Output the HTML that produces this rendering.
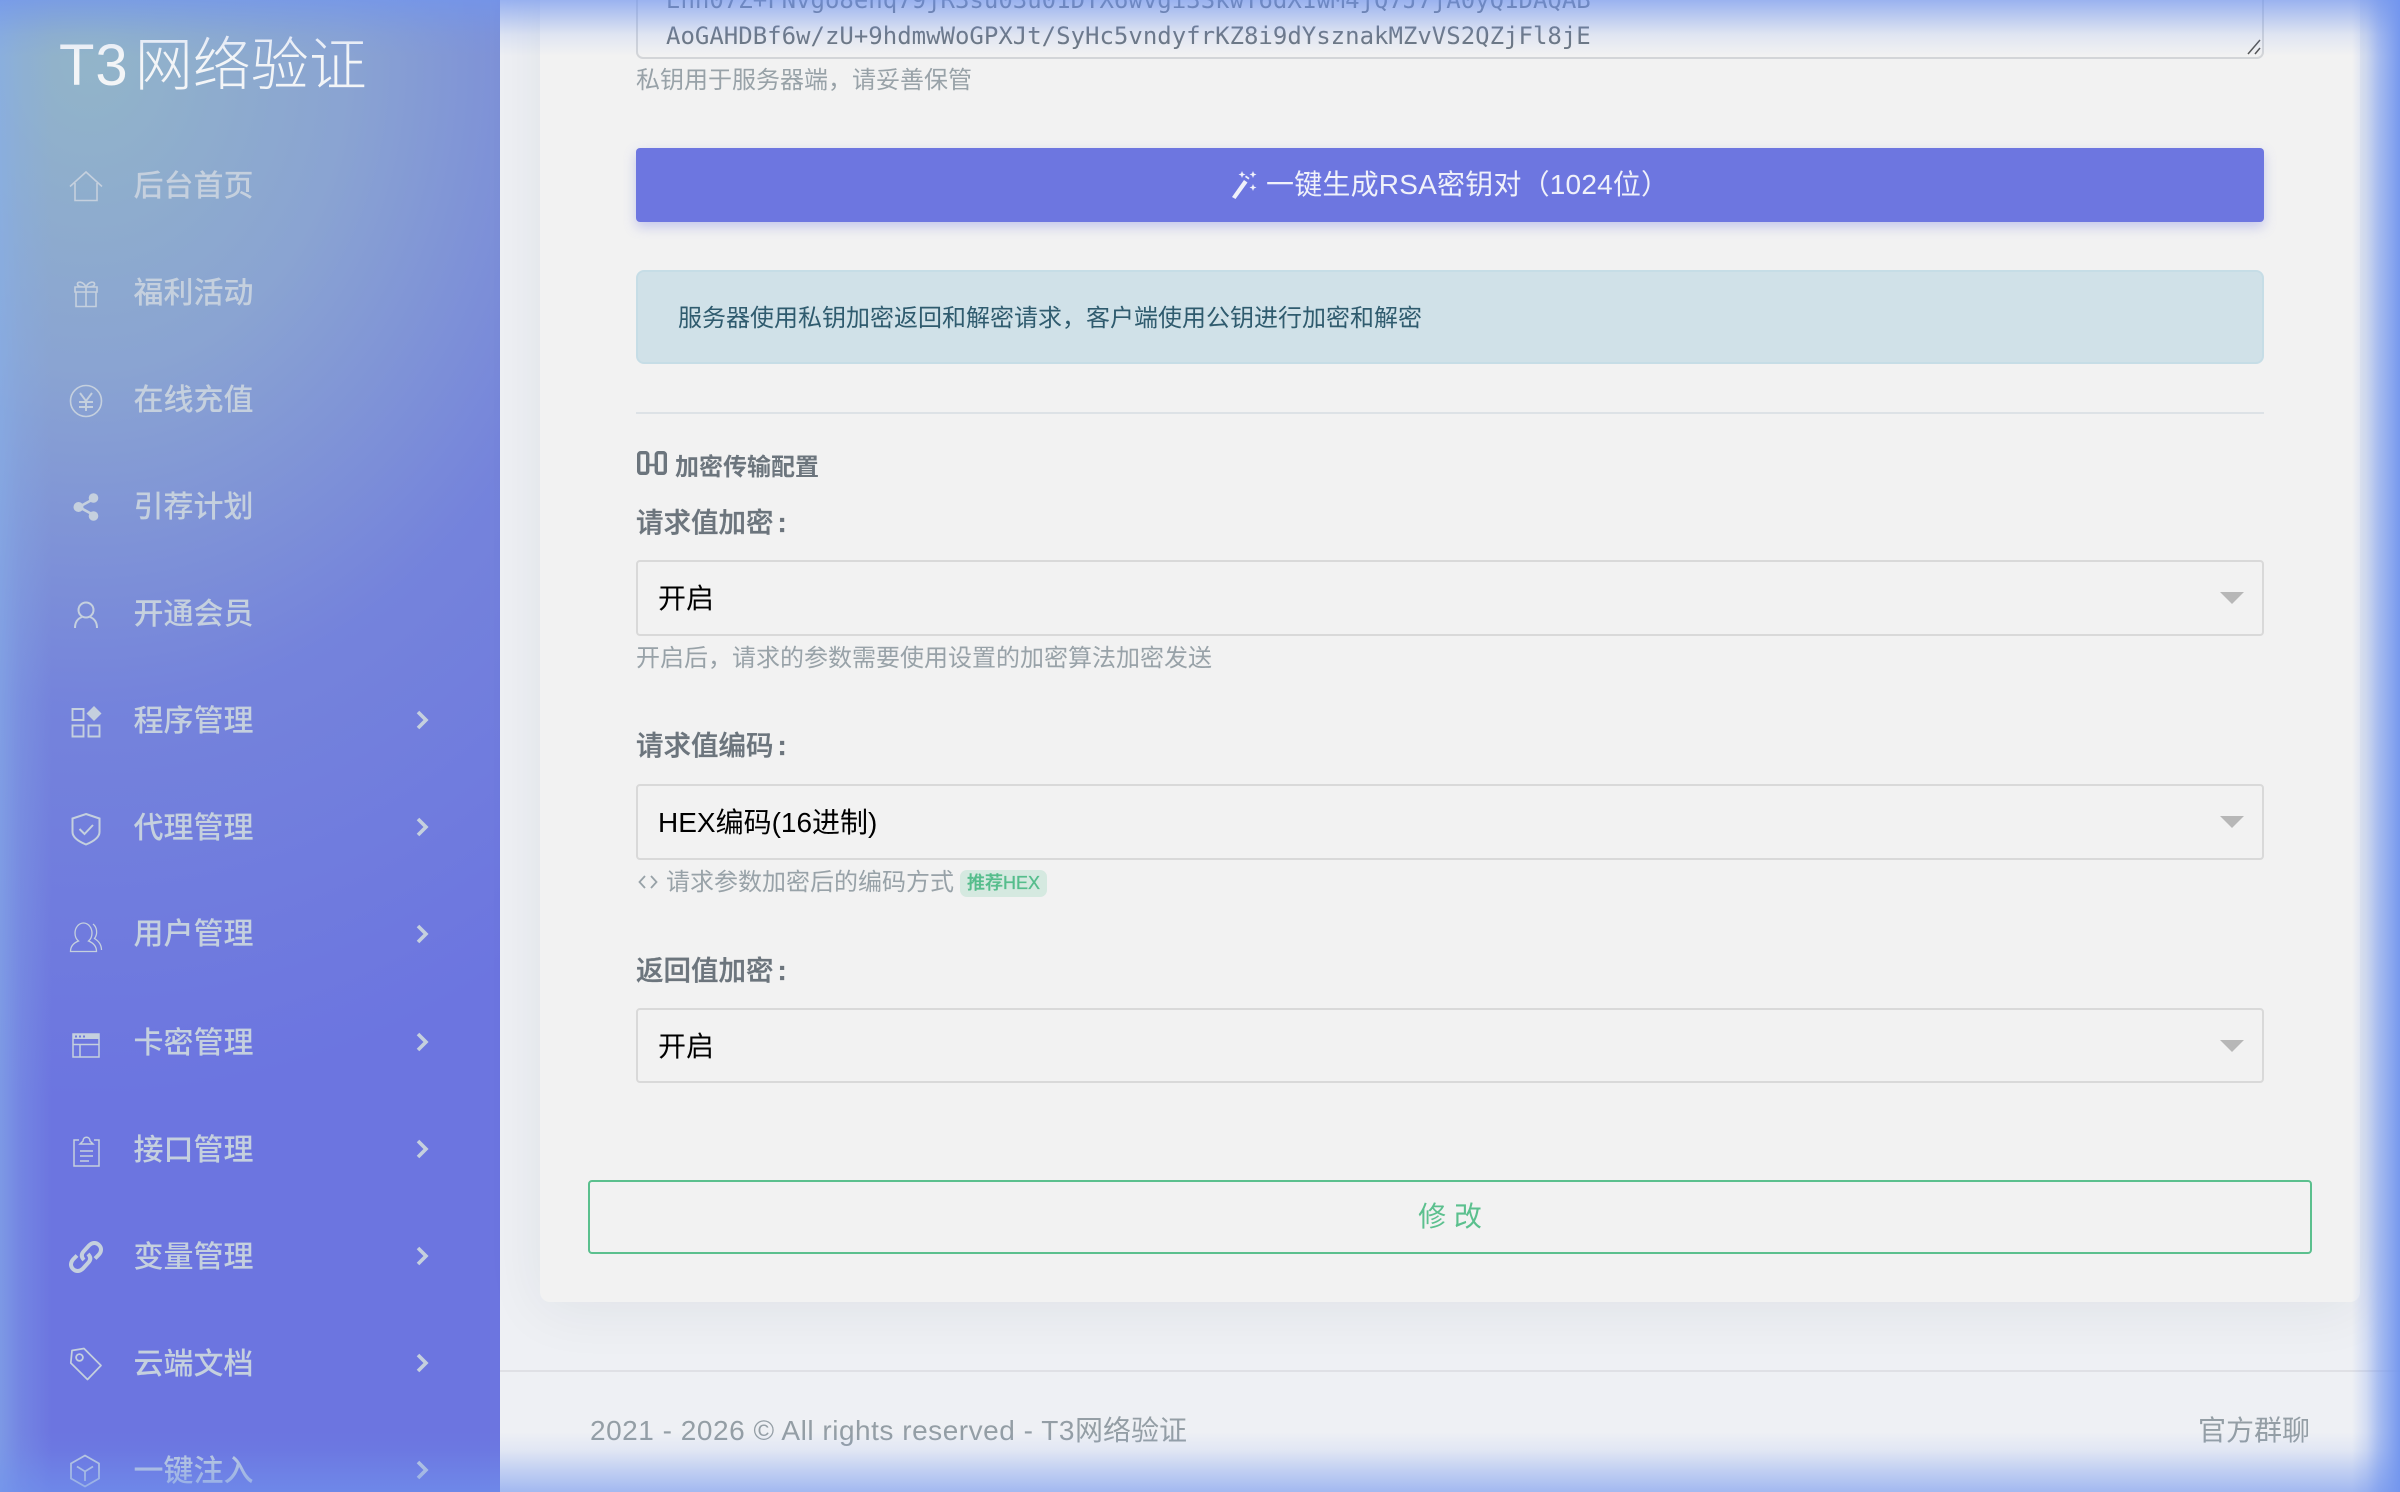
<!DOCTYPE html>
<html lang="zh">
<head>
<meta charset="utf-8">
<title>T3网络验证</title>
<style>
html,body{margin:0;padding:0;width:2400px;height:1492px;overflow:hidden;background:#eef0f4}
body{position:relative;font-family:"Liberation Sans","Noto Sans CJK SC",sans-serif}
.a{position:absolute;white-space:nowrap}
#side{position:absolute;left:0;top:0;width:500px;height:1492px;overflow:hidden;
background:
radial-gradient(ellipse 860px 1040px at 90px 60px,rgba(148,184,200,.95) 0,rgba(142,170,208,.88) 30%,rgba(125,145,215,.5) 62%,rgba(108,117,224,0) 100%),
#6c75e0}
.nav{position:absolute;left:133.500px;font-size:30px;line-height:40px;height:40px;color:#c5d0de;white-space:nowrap;font-weight:500}
.ic{position:absolute;left:70px;width:32px;height:32px;fill:none;stroke:#c5d0de;stroke-width:1.600;overflow:visible}
.ch{position:absolute;left:415px;width:14px;height:20px;fill:none;stroke:#c5d0de;stroke-width:3.600}
#card{position:absolute;left:540px;top:-40px;width:1820px;height:1342px;background:#f2f2f2;border-radius:10px;box-shadow:0 6px 60px rgba(30,40,60,.07)}
.lab{font-size:27.500px;line-height:36px;font-weight:500;color:#6c757d;left:636px;-webkit-text-stroke:.35px #6c757d}
.lab i{font-style:normal;margin-left:4px;font-weight:700}
.help{font-size:24px;line-height:32px;color:#98a2a8;left:636px}
.sel{position:absolute;left:636px;width:1624px;height:72px;border:2px solid #d9d9d9;border-radius:4px;color:#000;font-size:28px;line-height:74px;text-indent:20px;white-space:nowrap}
.sel:after{content:"";position:absolute;right:18px;top:30px;border-left:12px solid transparent;border-right:12px solid transparent;border-top:12px solid #b7b7b7}
#glow{position:absolute;left:0;top:0;width:2400px;height:1492px;pointer-events:none;z-index:9;
background:
linear-gradient(to left,rgba(112,148,238,.95) 0,rgba(112,148,238,.55) 45%,rgba(112,148,238,.22) 70%,rgba(112,148,238,0) 100%) right top/48px 100% no-repeat,
linear-gradient(to bottom,rgba(112,148,238,.68) 0,rgba(112,148,238,.42) 30%,rgba(112,148,238,.14) 62%,rgba(112,148,238,0) 100%) left top/100% 56px no-repeat,
linear-gradient(to top,rgba(112,148,238,.6) 0,rgba(112,148,238,.36) 35%,rgba(112,148,238,.1) 70%,rgba(112,148,238,0) 100%) left bottom/100% 60px no-repeat,
linear-gradient(to right,rgba(135,175,232,.62) 0,rgba(135,175,232,.28) 40%,rgba(135,175,232,0) 100%) left top/52px 100% no-repeat}
</style>
</head>
<body>
<div id="side">
<div class="a" style="left:59px;top:25px;font-size:58px;line-height:82px;font-weight:300;color:#f3f5f7"><span style="letter-spacing:1px;margin-right:6px;font-weight:400">T3</span>网络验证</div>

<div class="nav" style="top:167px">后台首页</div>
<svg class="ic" style="top:170px" viewBox="0 0 32 32"><path d="M0 16.500 16 2l16 14.500M5 13v17.500h22V13"/></svg>

<div class="nav" style="top:274px">福利活动</div>
<svg class="ic" style="top:277px" viewBox="0 0 32 32"><path d="M6 15h20v14.500H6zM5 10h22v5H5zM16 10v19.500M16 10c-3-6-9-6-8.500-2.500.3 2 3 2.500 8.500 2.500zM16 10c3-6 9-6 8.500-2.500-.3 2-3 2.500-8.500 2.500z"/></svg>

<div class="nav" style="top:381px">在线充值</div>
<svg class="ic" style="top:385px" viewBox="0 0 32 32"><circle cx="16" cy="16" r="15.500"/><path d="M10 8l6 8 6-8M9 17h14M9 22h14M16 16v10" stroke-width="1.900"/></svg>

<div class="nav" style="top:488px">引荐计划</div>
<svg class="ic" style="top:491px" viewBox="0 0 32 32"><path d="M23.500 8 9 16l14.500 8" stroke-width="2.600"/><circle cx="23.500" cy="7" r="4.800" fill="#c5d0de" stroke="none"/><circle cx="8.500" cy="16" r="5" fill="#c5d0de" stroke="none"/><circle cx="23.500" cy="25" r="4.800" fill="#c5d0de" stroke="none"/></svg>

<div class="nav" style="top:595px">开通会员</div>
<svg class="ic" style="top:599px" viewBox="0 0 32 32"><circle cx="16" cy="11" r="7.500" stroke-width="2"/><path d="M5 29c0-6 3-9.500 7-11M27 29c0-6-3-9.500-7-11" stroke-width="2"/></svg>

<div class="nav" style="top:702px">程序管理</div>
<svg class="ic" style="top:706px" viewBox="0 0 32 32"><path d="M2.500 3h11v11h-11zM2.500 19.500h11v11h-11zM18.500 19.500h11v11h-11z" stroke-width="1.900"/><path d="M24 0l7.500 7.500L24 15l-7.500-7.500z" fill="#c5d0de" stroke="none"/></svg>

<div class="nav" style="top:809px">代理管理</div>
<svg class="ic" style="top:813px" viewBox="0 0 32 32"><path d="M16 1 29.500 5.500V19c0 5-5 9-13.500 12.500C7.500 28 2.500 24 2.500 19V5.500z" stroke-width="2"/><path d="M9.500 16l5 5 8.500-9" stroke-width="2"/></svg>

<div class="nav" style="top:915px">用户管理</div>
<svg class="ic" style="top:921px" viewBox="0 0 32 32"><path d="M.5 30.500c0-5 3-8.500 8-10.500-2.500-2-3.500-5-3.500-8 0-5 3.500-10 8.500-10s8.500 5 8.500 10c0 3-1 6-3.500 8 5 2 8 5.500 8 10.500zM23 3c4 3 5 10 1.500 14.500 4 2.500 7 6 7 11.500" stroke-width="1.300"/></svg>

<div class="nav" style="top:1024px">卡密管理</div>
<svg class="ic" style="top:1029px" viewBox="0 0 32 32"><path d="M3 5h26v23H3zM3 15.500h26M10 15.500V28" stroke-width="1.500"/><path d="M3 5h26v5H3z" fill="#c5d0de" stroke="none"/><path d="M5 6.500h2v2H5zM9 6.500h2v2H9zM13 6.500h2v2h-2z" fill="#6f7ad9" stroke="none"/></svg>

<div class="nav" style="top:1131px">接口管理</div>
<svg class="ic" style="top:1135px" viewBox="0 0 32 32"><path d="M9 5H4v26h25V5h-5M10 9h13l-2-2-1-1c0-5-7-5-7 0l-1 1zM10 16h13M10 21h13M10 26h9" stroke-width="1.500"/></svg>

<div class="nav" style="top:1238px">变量管理</div>
<svg class="ic" style="top:1241px" viewBox="0 0 32 32"><path d="M14 19c-3-3-3-6 0-9l5-5.500c3-3 7-3.500 10-.5s2.500 7-.5 10l-3.500 3.500M18 13c3 3 3 6 0 9l-5 5.500c-3 3-7 3.500-10 .5s-2.500-7 .5-10L7 14.500" stroke-width="4"/></svg>

<div class="nav" style="top:1345px">云端文档</div>
<svg class="ic" style="top:1348px" viewBox="0 0 32 32"><path d="M2 2.500 14 .5 31 17.500 17.500 31.500.8 15z" stroke-width="1.700" stroke-linejoin="round"/><circle cx="9.500" cy="9.500" r="3.400" stroke-width="1.800"/></svg>

<div class="nav" style="top:1452px">一键注入</div>
<svg class="ic" style="top:1455px" viewBox="0 0 32 32"><path d="M15 .5 29 8.500v15l-14 8-14-8v-15zM7 11.500l8 5 8-5M15 16.500V26" stroke-width="1.800"/></svg>

<svg class="ch" style="top:710px" viewBox="0 0 14 20"><path d="M3 2l8 8-8 8"/></svg>
<svg class="ch" style="top:817px" viewBox="0 0 14 20"><path d="M3 2l8 8-8 8"/></svg>
<svg class="ch" style="top:924px" viewBox="0 0 14 20"><path d="M3 2l8 8-8 8"/></svg>
<svg class="ch" style="top:1032px" viewBox="0 0 14 20"><path d="M3 2l8 8-8 8"/></svg>
<svg class="ch" style="top:1139px" viewBox="0 0 14 20"><path d="M3 2l8 8-8 8"/></svg>
<svg class="ch" style="top:1246px" viewBox="0 0 14 20"><path d="M3 2l8 8-8 8"/></svg>
<svg class="ch" style="top:1353px" viewBox="0 0 14 20"><path d="M3 2l8 8-8 8"/></svg>
<svg class="ch" style="top:1460px" viewBox="0 0 14 20"><path d="M3 2l8 8-8 8"/></svg>
</div>

<div id="card"></div>

<!-- textarea -->
<div style="position:absolute;left:636px;top:-40px;width:1624px;height:94.500px;border:2px solid #d3d5d8;border-radius:7px;overflow:hidden"></div>
<div class="a" style="left:666px;top:-18px;font:24px/36px 'DejaVu Sans Mono',monospace;color:#6c757d">Enn07Z+FNvgo8enq79jR3su03u01DYX6wvgi3SkwT6dX1wM4jQ7J7jA0yQ1DAQAB</div>
<div class="a" style="left:666px;top:18px;font:24px/36px 'DejaVu Sans Mono',monospace;color:#6c757d">AoGAHDBf6w/zU+9hdmwWoGPXJt/SyHc5vndyfrKZ8i9dYsznakMZvVS2QZjFl8jE</div>
<svg class="a" style="left:2246px;top:38px" width="16" height="18" viewBox="0 0 16 18" fill="none" stroke="#555" stroke-width="1.500"><path d="M2 16 14 2M9 16l5-6"/></svg>
<div class="a help" style="top:65px">私钥用于服务器端，请妥善保管</div>

<!-- purple button -->
<div style="position:absolute;left:636px;top:148px;width:1628px;height:74px;background:#6d76e0;border-radius:4px;box-shadow:0 5px 12px rgba(109,118,224,.35)"></div>
<svg class="a" style="left:1230px;top:169px" width="28" height="30" viewBox="0 0 28 30"><path d="M2 28 14 11l3.500 2.500L5.500 30z" fill="#f0f1fa"/><path d="M15 8l3.500 2.500 1-1.500L16 6.500z" fill="#f0f1fa"/><path d="M12 2l1 2.500 2.500 1-2.500 1-1 2.500-1-2.500-2.500-1 2.500-1zM23 2l1 2.500 2.500 1-2.500 1-1 2.500-1-2.500-2.500-1 2.500-1zM23 15l1 2.500 2.500 1-2.500 1-1 2.500-1-2.500-2.500-1 2.500-1z" fill="#f0f1fa"/></svg>
<div class="a" style="left:1266px;top:165px;font-size:28px;line-height:40px;color:#f0f1fa;letter-spacing:.2px">一键生成RSA密钥对（1024位）</div>

<!-- alert -->
<div style="position:absolute;left:636px;top:270px;width:1624px;height:90px;background:#d0e1e8;border:2px solid #c6dde6;border-radius:8px"></div>
<div class="a" style="left:678px;top:303px;font-size:24px;line-height:32px;color:#2f5b6e">服务器使用私钥加密返回和解密请求，客户端使用公钥进行加密和解密</div>

<div style="position:absolute;left:636px;top:412px;width:1628px;height:2px;background:#dde2e6"></div>

<svg class="a" style="left:637px;top:451px" width="30" height="24" viewBox="0 0 30 24" fill="none" stroke="#6c757d" stroke-width="3.400"><rect x="1.700" y="1.700" width="9" height="20.600" rx="2"/><rect x="19.300" y="1.700" width="9" height="20.600" rx="2"/><path d="M11 14h8" stroke-width="2.500"/></svg>
<div class="a" style="left:675px;top:452px;font-size:24px;line-height:32px;font-weight:700;color:#6c757d">加密传输配置</div>

<div class="a lab" style="top:505px">请求值加密<i>:</i></div>
<div class="sel" style="top:560px">开启</div>
<div class="a help" style="top:643px">开启后，请求的参数需要使用设置的加密算法加密发送</div>

<div class="a lab" style="top:728px">请求值编码<i>:</i></div>
<div class="sel" style="top:784px">HEX编码(16进制)</div>
<svg class="a" style="left:638px;top:872px" width="20" height="20" viewBox="0 0 20 20" fill="none" stroke="#98a2a8" stroke-width="1.800"><path d="M7 4 1.500 10 7 16M13 4l5.500 6L13 16"/></svg>
<div class="a help" style="left:666px;top:867px">请求参数加密后的编码方式</div>
<div class="a" style="left:960px;top:870px;width:87px;height:27px;background:#d5e9e0;border-radius:7px;color:#55bd8c;font-size:18px;line-height:27px;font-weight:500;-webkit-text-stroke:.3px #55bd8c;text-align:center">推荐HEX</div>

<div class="a lab" style="top:953px">返回值加密<i>:</i></div>
<div class="sel" style="top:1008px;height:71px">开启</div>

<div style="position:absolute;left:588px;top:1180px;width:1720px;height:70px;border:2px solid #5bc08e;border-radius:4px"></div>
<div class="a" style="left:588px;top:1197px;width:1724px;text-align:center;font-size:28px;line-height:40px;color:#5bc08e">修 改</div>

<!-- footer -->
<div style="position:absolute;left:500px;top:1370px;width:1900px;height:2px;background:#dfe0e5"></div>
<div class="a" style="left:590px;top:1411px;font-size:28px;line-height:40px;color:#949ea5"><span style="letter-spacing:.52px">2021 - 2026 © All rights reserved - T3</span>网络验证</div>
<div class="a" style="left:2198px;top:1411px;font-size:28px;line-height:40px;color:#949ea5">官方群聊</div>

<div id="glow"></div>
</body>
</html>
